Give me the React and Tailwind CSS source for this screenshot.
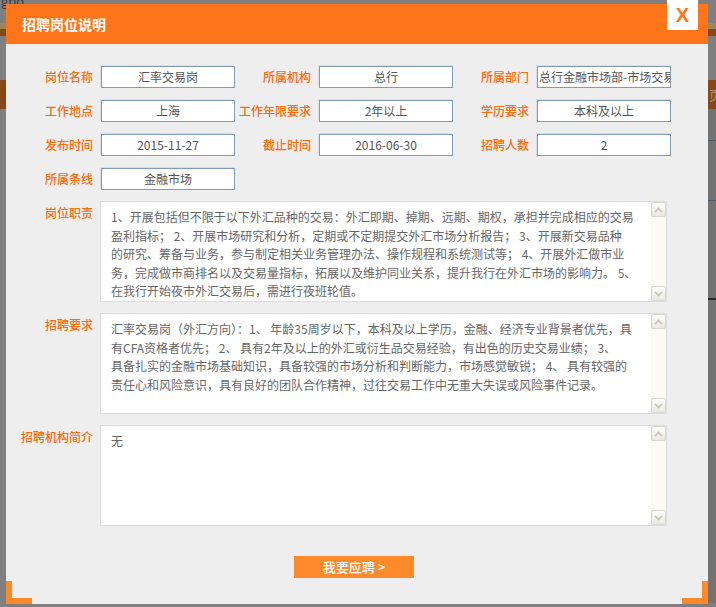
import React from "react";

function ScrollBtn({ up }) {
  return (
    <div className="h-[15px] w-[15px] border border-[#d6d6cc] rounded-[2px] bg-linear-to-b from-[#fdfdf9] to-[#e8e8e0] flex items-center justify-center">
      <svg width="9" height="6" viewBox="0 0 9 6">
        <path
          d={up ? "M1 5 L4.5 1.5 L8 5" : "M1 1 L4.5 4.5 L8 1"}
          stroke="#c3c3b9"
          strokeWidth="1.6"
          fill="none"
        />
      </svg>
    </div>
  );
}

function Scroll() {
  return (
    <div className="w-[15px] shrink-0 bg-[#fbfbf3] flex flex-col justify-between">
      <ScrollBtn up />
      <ScrollBtn />
    </div>
  );
}

function Label({ children }) {
  return (
    <div className="pr-[8px] text-right text-[12px] font-medium leading-[22px] text-[#ff6a0a] whitespace-nowrap">
      {children}
    </div>
  );
}

function Input({ children, left }) {
  return (
    <div
      className={
        "h-[22px] border border-[#7f9db9] bg-white shadow-[-1px_-1px_0_#dedede] text-[12px] leading-[20px] text-[#555] whitespace-nowrap overflow-hidden " +
        (left ? "text-left pl-[1px]" : "text-center")
      }
    >
      {children}
    </div>
  );
}

function Area({ label, lines }) {
  return (
    <div className="flex items-start">
      <div className="w-[94px] pr-[7px] pt-[4px] text-right text-[12px] font-medium leading-[16px] text-[#ff6a0a] whitespace-nowrap">
        {label}
      </div>
      <div className="w-[567px] h-[101px] bg-white border border-[#dddddd] flex">
        <div className="flex-1 pl-[10px] pt-[6px] text-[12px] leading-[18.5px] text-[#666] overflow-hidden">
          {lines.map((l, i) => (
            <div key={i} className="whitespace-nowrap">
              {l}
            </div>
          ))}
        </div>
        <Scroll />
      </div>
    </div>
  );
}

export default function App() {
  return (
    <div className="relative w-[716px] h-[607px] overflow-hidden bg-[#7f7f7f] font-['Noto_Sans_CJK_SC','Liberation_Sans',sans-serif]">
      {/* dimmed page behind the dialog */}
      <div className="h-[27px] text-[13px] leading-[10px] text-[#3a3a3a] -mt-[4px] pl-[1px]">gbo</div>
      <div className="h-[6px] bg-[#9a8659]" />
      <div className="h-[7px] bg-[#874714]" />
      <div className="h-[44px]" />
      <div className="h-[29px] bg-[#874716] flex justify-end text-[#b09070] text-[13px] leading-[29px]">
        <span className="mr-[-6px]">页</span>
      </div>
      <div className="flex h-[494px]">
        <div className="flex-1" />
        <div className="w-[8px] bg-[#727272] flex flex-col">
          <div className="h-[31px]" />
          <div className="h-[1px] bg-[#4e5866]" />
          <div className="h-[59px]" />
          <div className="h-[1px] bg-[#4e5866]" />
          <div className="h-[97px]" />
          <div className="h-[2px] bg-[#2a2a2a]" />
        </div>
      </div>

      {/* dialog */}
      <div className="absolute left-[6px] top-[4px] w-[702px] h-[600px] bg-[#eeeeee] flex flex-col">
        <div className="h-[40px] shrink-0 bg-[#ff7519] flex items-center pl-[16px]">
          <span className="text-white text-[14px] font-bold leading-[20px]">招聘岗位说明</span>
        </div>
        <div className="absolute top-[-4px] right-[10px] w-[31px] h-[30px] bg-white flex items-center justify-center">
          <span className="font-['Liberation_Sans',sans-serif] font-bold text-[20px] leading-[20px] text-[#ff7519]">X</span>
        </div>

        <div className="pt-[22px] grid grid-cols-[95px_134px_84px_134px_84px_134px] gap-y-[12px]">
          <Label>岗位名称</Label>
          <Input>汇率交易岗</Input>
          <Label>所属机构</Label>
          <Input>总行</Input>
          <Label>所属部门</Label>
          <Input left>总行金融市场部-市场交易处</Input>

          <Label>工作地点</Label>
          <Input>上海</Input>
          <Label>工作年限要求</Label>
          <Input>2年以上</Input>
          <Label>学历要求</Label>
          <Input>本科及以上</Input>

          <Label>发布时间</Label>
          <Input>2015-11-27</Input>
          <Label>截止时间</Label>
          <Input>2016-06-30</Input>
          <Label>招聘人数</Label>
          <Input>2</Input>

          <Label>所属条线</Label>
          <Input>金融市场</Input>
        </div>

        <div className="mt-[11px] flex flex-col gap-[11px]">
          <Area
            label="岗位职责"
            lines={[
              "1、开展包括但不限于以下外汇品种的交易：外汇即期、掉期、远期、期权，承担并完成相应的交易",
              "盈利指标； 2、开展市场研究和分析，定期或不定期提交外汇市场分析报告； 3、开展新交易品种",
              "的研究、筹备与业务，参与制定相关业务管理办法、操作规程和系统测试等； 4、开展外汇做市业",
              "务，完成做市商排名以及交易量指标，拓展以及维护同业关系，提升我行在外汇市场的影响力。 5、",
              "在我行开始夜市外汇交易后，需进行夜班轮值。",
            ]}
          />
          <Area
            label="招聘要求"
            lines={[
              "汇率交易岗（外汇方向）：1、 年龄35周岁以下，本科及以上学历，金融、经济专业背景者优先，具",
              "有CFA资格者优先； 2、 具有2年及以上的外汇或衍生品交易经验，有出色的历史交易业绩； 3、",
              "具备扎实的金融市场基础知识，具备较强的市场分析和判断能力，市场感觉敏锐； 4、 具有较强的",
              "责任心和风险意识，具有良好的团队合作精神，过往交易工作中无重大失误或风险事件记录。",
            ]}
          />
          <Area label="招聘机构简介" lines={["无"]} />
        </div>

        <div className="mt-[30px] ml-[288px] w-[120px] h-[22px] bg-[#ff8a2b] flex items-center justify-center text-white text-[13px] font-medium leading-[22px]">
          我要应聘 &gt;
        </div>

        <div className="absolute left-0 bottom-0 w-[6px] h-[23px] bg-[#ff8a2b]" />
        <div className="absolute left-0 bottom-0 w-[26px] h-[6px] bg-[#ff8a2b]" />
        <div className="absolute right-0 bottom-0 w-[6px] h-[23px] bg-[#ff8a2b]" />
        <div className="absolute right-0 bottom-0 w-[26px] h-[6px] bg-[#ff8a2b]" />
      </div>
    </div>
  );
}
